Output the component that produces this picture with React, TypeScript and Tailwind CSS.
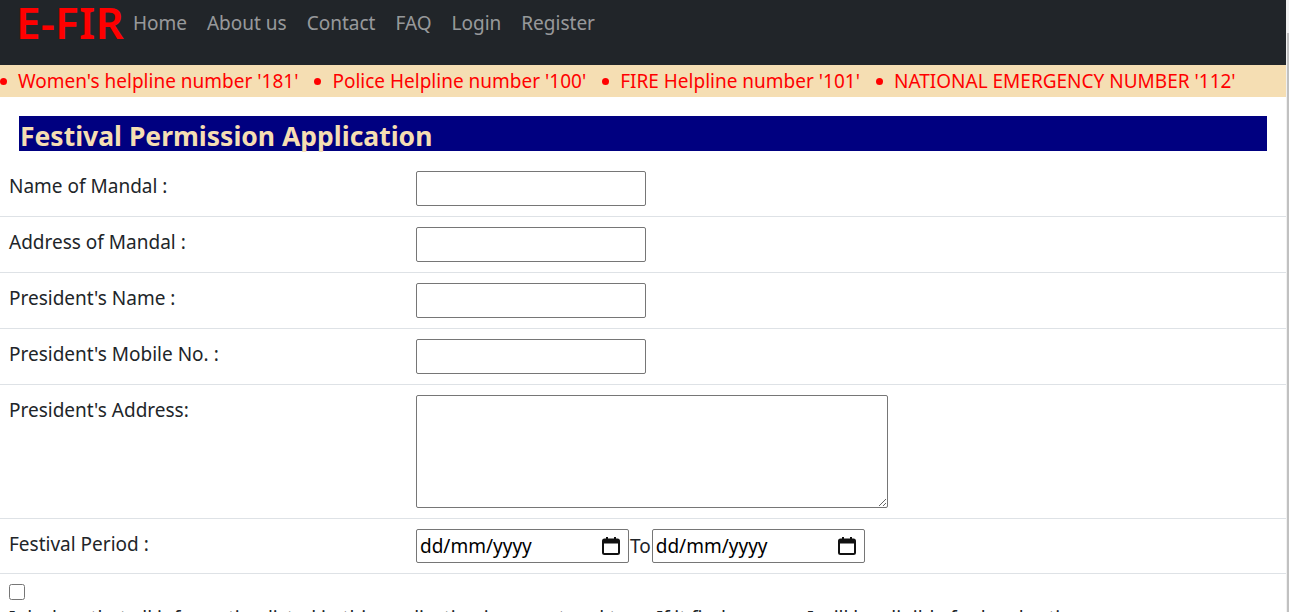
import React from "react";

const font = { fontFamily: '"Noto Sans", "Open Sans", sans-serif' };

const navLinks = ["Home", "About us", "Contact", "FAQ", "Login", "Register"];

const helplines = [
  "Women's helpline number '181'",
  "Police Helpline number '100'",
  "FIRE Helpline number '101'",
  "NATIONAL EMERGENCY NUMBER '112'",
];

function CalendarIcon() {
  return (
    <svg width="20" height="20" viewBox="0 0 20 20" className="shrink-0">
      <rect x="2" y="3.5" width="16" height="14.5" rx="1.5" fill="none" stroke="#111" strokeWidth="2" />
      <rect x="2" y="3.5" width="16" height="4" fill="#111" />
      <rect x="5" y="1" width="2" height="3" fill="#111" />
      <rect x="13" y="1" width="2" height="3" fill="#111" />
    </svg>
  );
}

function DateBox() {
  return (
    <div className="flex items-center justify-between w-[213px] h-[34px] border border-[#767676] rounded-[2px] pl-[3px] pr-[7px] bg-white">
      <span className="text-[19px] text-black leading-none">dd/mm/yyyy</span>
      <CalendarIcon />
    </div>
  );
}

function TextRow({ label }: { label: string }) {
  return (
    <div className="flex border-t border-[#dee2e6]">
      <div className="w-[408px] pl-[9px] pt-[12px] text-[19px] leading-[26px] text-[#212529]">{label}</div>
      <div className="py-[10px] pl-[8px]">
        <input className="block w-[230px] h-[35px] border border-[#767676] rounded-[2px] bg-white" />
      </div>
    </div>
  );
}

export default function App() {
  return (
    <div className="flex w-[1289px] h-[612px] overflow-hidden bg-white" style={font}>
      <div className="w-[1286px] shrink-0">
        <nav className="h-[65px] bg-[#212529] flex items-start pl-[16px]">
          <span className="text-[44px] font-semibold text-[#ff0000] leading-[46px] -mt-[1px] tracking-[0.2px]">E-FIR</span>
          <div className="flex mt-[9px]">
            {navLinks.map((l) => (
              <span key={l} className="px-[10px] first:pl-[9px] text-[19px] text-[#ffffff8c] leading-[28px]">
                {l}
              </span>
            ))}
          </div>
        </nav>
        <div className="h-[32px] bg-[#f5deb3] flex items-center text-[#ff0000] text-[19px] whitespace-nowrap">
          {helplines.map((h, i) => (
            <span key={h} className={i === 0 ? "flex items-center" : "flex items-center ml-[16px]"}>
              <span className="inline-block w-[7px] h-[7px] rounded-full bg-[#ff0000] mr-[11px]" />
              <span>{h}</span>
            </span>
          ))}
        </div>
        <div className="pt-[19px] px-[19px]">
          <h2 className="h-[35px] bg-[#000080] text-[#f5deb3] text-[26.5px] font-bold leading-[40px] pl-[1px]">
            Festival Permission Application
          </h2>
        </div>
        <div className="mt-[10px]">
          <div className="flex">
            <div className="w-[408px] pl-[9px] pt-[12px] text-[19px] leading-[26px] text-[#212529]">Name of Mandal :</div>
            <div className="py-[10px] pl-[8px]">
              <input className="block w-[230px] h-[35px] border border-[#767676] rounded-[2px] bg-white" />
            </div>
          </div>
          <TextRow label="Address of Mandal :" />
          <TextRow label="President's Name :" />
          <TextRow label="President's Mobile No. :" />
          <div className="flex border-t border-[#dee2e6]">
            <div className="w-[408px] pl-[9px] pt-[12px] text-[19px] leading-[26px] text-[#212529]">President's Address:</div>
            <div className="py-[10px] pl-[8px]">
              <textarea className="block w-[472px] h-[113px] border border-[#767676] rounded-[2px] bg-white" />
            </div>
          </div>
          <div className="flex border-t border-[#dee2e6] border-b">
            <div className="w-[408px] pl-[9px] pt-[12px] text-[19px] leading-[26px] text-[#212529]">Festival Period :</div>
            <div className="py-[10px] pl-[8px] flex items-center">
              <DateBox />
              <span className="text-[19px] text-[#212529] px-[1px]">To</span>
              <DateBox />
            </div>
          </div>
          <div className="pl-[9px] pt-[10px]">
            <input type="checkbox" className="block w-[16px] h-[16px] m-0" />
            <p className="text-[19px] text-[#212529] leading-[26px] mt-[5px] whitespace-nowrap">
              I declare that all information listed in this application is correct and true. If it finds wrong, I will be eligible for legal action
            </p>
          </div>
        </div>
      </div>
      <div className="w-[3px] bg-[#f1f1f1] pt-[33px]">
        <div className="w-[2px] h-full bg-[#c1c1c1] ml-[1px]" />
      </div>
    </div>
  );
}
